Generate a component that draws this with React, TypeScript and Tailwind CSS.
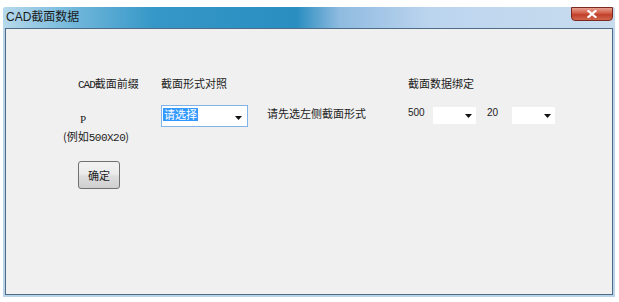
import React from "react";

const cjk = '"Noto Sans CJK SC", "Liberation Sans", sans-serif';

function Arrow() {
  return (
    <svg width="7" height="4" viewBox="0 0 7 4" className="shrink-0">
      <path d="M0 0 H7 L3.5 4 Z" fill="#111" />
    </svg>
  );
}

export default function App() {
  return (
    <div
      className="w-[619px] h-[302px] bg-white overflow-hidden flex flex-col pt-[7px] pl-[3px] pr-[4px]"
      style={{ fontFamily: cjk }}
    >
      <div className="flex flex-col h-[290px] bg-[#b9d3ea] rounded-t-[3px]">
        {/* title bar */}
        <div className="h-[21px] flex items-start justify-between bg-[linear-gradient(90deg,#b7d9ec_0%,#6fb6da_12%,#3497c7_25%,#2a8ec1_48%,#8fbbe0_55%,#bcd5ef_70%,#c3d9ee_88%,#c9dcee_100%)] rounded-t-[3px]">
          <div className="pl-[3px] pt-[2px] text-[12px] leading-[16px] text-[#1a1a1a]" style={{ fontFamily: '"Liberation Sans", "Noto Sans CJK SC", sans-serif' }}>
            CAD截面数据
          </div>
          <div className="w-[42px] h-[14px] mr-[2px] rounded-b-[4px] border border-[#7a2a20] bg-[linear-gradient(180deg,#e8a08f_0%,#d05a43_45%,#c0402c_55%,#d2664c_100%)] flex items-center justify-center">
            <svg width="10" height="8" viewBox="0 0 10 8">
              <path d="M1.5 1 L8.5 7 M8.5 1 L1.5 7" stroke="#fff" strokeWidth="2.2" strokeLinecap="square" />
            </svg>
          </div>
        </div>
        {/* client */}
        <div className="flex-1 mx-[2px] mb-[2px] border border-[#4f6b86] bg-[#f0f0f0] text-[11px] leading-[14px] text-[#222] pl-[57px] pt-[47px]">
          <div className="flex">
            {/* column 1 */}
            <div className="w-[98px] flex flex-col">
              <div className="pl-[15px]">
                <span style={{ fontFamily: '"Liberation Mono", "Noto Sans CJK SC", monospace' }} className="tracking-[-1px]">CAD</span>截面前缀
              </div>
              <div className="pl-[17px] mt-[20px]" style={{ fontFamily: '"Liberation Serif", serif' }}>P</div>
              <div className="mt-[3px] whitespace-nowrap">
                (例如<span style={{ fontFamily: '"Liberation Mono", monospace' }} className="tracking-[-0.5px]">500X20</span>)
              </div>
              <div className="pl-[15px] mt-[16px]">
                <div className="w-[42px] h-[28px] rounded-[3px] border border-[#707070] bg-[linear-gradient(180deg,#f2f2f2_0%,#ebebeb_45%,#dddddd_55%,#cfcfcf_100%)] flex items-center justify-center text-[11px]">
                  确定
                </div>
              </div>
            </div>
            {/* column 2 */}
            <div className="w-[106px] flex flex-col">
              <div>截面形式对照</div>
              <div className="mt-[15px] w-[87px] h-[22px] bg-white border border-[#7eb4ea] flex items-start justify-between pl-[1px] pr-[5px] pt-[2px]">
                <span className="bg-[#3399ff] text-white px-[1px] leading-[13px]">请选择</span>
                <div className="mt-[8px]"><Arrow /></div>
              </div>
            </div>
            {/* column 3 */}
            <div className="w-[141px] pt-[30px]">请先选左侧截面形式</div>
            {/* column 4 */}
            <div className="flex flex-col">
              <div>截面数据绑定</div>
              <div className="mt-[16px] flex items-start">
                <span className="w-[25px]" style={{ fontFamily: '"Liberation Sans", sans-serif', fontSize: 10 }}>500</span>
                <div className="w-[43px] h-[17px] bg-white flex items-center justify-end pr-[4px] mt-[1px]"><Arrow /></div>
                <span className="w-[36px] pl-[11px]" style={{ fontFamily: '"Liberation Sans", sans-serif', fontSize: 10 }}>20</span>
                <div className="w-[43px] h-[17px] bg-white flex items-center justify-end pr-[4px] mt-[1px]"><Arrow /></div>
              </div>
            </div>
          </div>
        </div>
      </div>
    </div>
  );
}
